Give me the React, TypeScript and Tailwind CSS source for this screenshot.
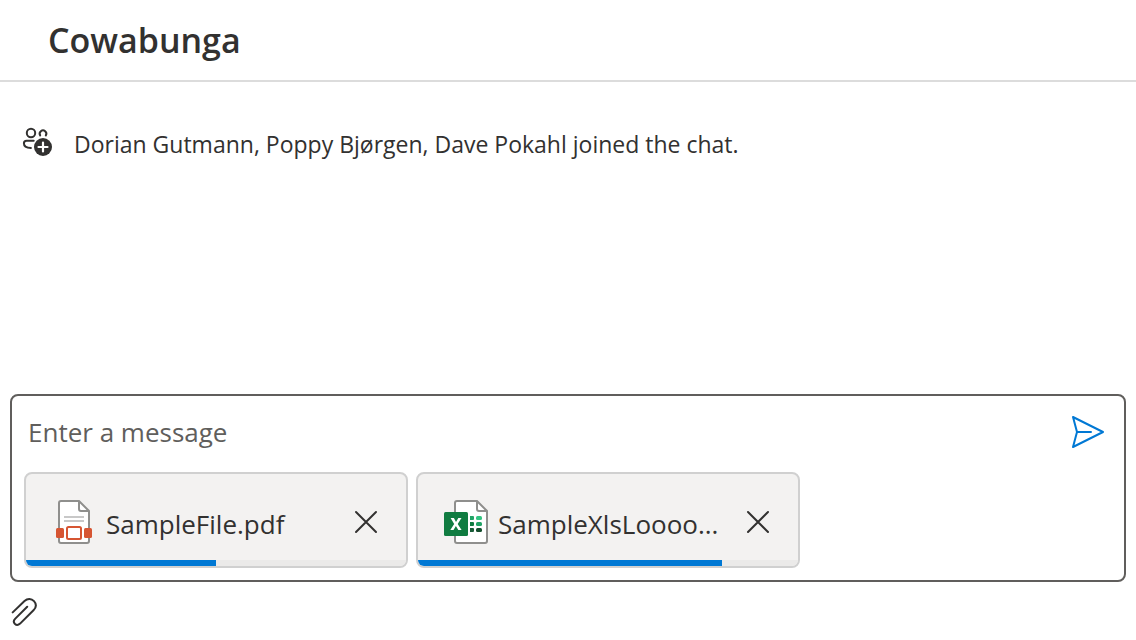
import { useState } from 'react';
import type { ReactNode } from 'react';

type Attachment = {
  id: string;
  name: string;
  progress: number;
  icon: ReactNode;
};

function PeopleAddIcon() {
  return (
    <svg aria-hidden="true" className="h-8 w-8 shrink-0" viewBox="0 0 32 32" fill="none">
      <g stroke="#323130" strokeWidth="2" strokeLinecap="round">
        <circle cx="9" cy="7" r="4.2" />
        <path d="M18.2 9.4a3.3 3.3 0 1 1 5.6 0" />
        <path d="M11.7 14.8H4.6c-1.9 0-2.7 1-2.7 2.5 0 3 2.7 4.7 7 4.8" />
      </g>
      <circle cx="21" cy="21" r="9" fill="#323130" />
      <path d="M21 16.5v9M16.5 21h9" stroke="#fff" strokeWidth="2.2" strokeLinecap="round" />
    </svg>
  );
}

function PdfIcon() {
  return (
    <svg aria-hidden="true" className="h-12 w-12 shrink-0" viewBox="0 0 48 48" fill="none">
      <path d="M11 3h18l10 10v30a2 2 0 0 1-2 2H11a2 2 0 0 1-2-2V5a2 2 0 0 1 2-2Z" fill="#fff" stroke="#8f8f8d" strokeWidth="2" />
      <path d="M29 3v8a2 2 0 0 0 2 2h8" stroke="#8f8f8d" strokeWidth="2" />
      <path d="M14 19h20M14 23h20" stroke="#c8c8c8" strokeWidth="2" />
      <rect x="6" y="30" width="8" height="10" rx="1.5" fill="#d65532" />
      <rect x="34" y="30" width="8" height="10" rx="1.5" fill="#d65532" />
      <rect x="14" y="28" width="20" height="14" fill="#fff" />
      <rect x="17" y="29" width="14" height="12" rx="1.5" fill="#fff" stroke="#d65532" strokeWidth="2" />
    </svg>
  );
}

function ExcelIcon() {
  return (
    <svg aria-hidden="true" className="h-12 w-12 shrink-0" viewBox="0 0 48 48" fill="none">
      <path d="M15 3h20l10 10v30a2 2 0 0 1-2 2H15a2 2 0 0 1-2-2V5a2 2 0 0 1 2-2Z" fill="#fff" stroke="#8f8f8d" strokeWidth="2" />
      <path d="M35 3v8a2 2 0 0 0 2 2h8" stroke="#8f8f8d" strokeWidth="2" />
      <path d="M28 18h3a1 1 0 0 1 1 1v2a1 1 0 0 1-1 1h-3Z" fill="#21a366" />
      <rect x="34" y="18" width="6" height="4" rx="1.5" fill="#33c481" />
      <path d="M28 24h3a1 1 0 0 1 1 1v2a1 1 0 0 1-1 1h-3Z" fill="#107c41" />
      <rect x="34" y="24" width="6" height="4" rx="1.5" fill="#21a366" />
      <path d="M28 30h3a1 1 0 0 1 1 1v2a1 1 0 0 1-1 1h-3Z" fill="#185c37" />
      <rect x="34" y="30" width="6" height="4" rx="1.5" fill="#134d2c" />
      <rect x="2" y="14" width="24" height="24" rx="1.5" fill="#107c41" />
      <path d="m8.6 20 3.600 6-3.900 6h3.200l2.400-4.100 2.400 4.100h3.300l-3.900-6 3.800-6h-3.200L14 24l-2.100-4H8.600Z" fill="#fff" />
    </svg>
  );
}

function CloseIcon() {
  return (
    <svg aria-hidden="true" className="h-6 w-6" viewBox="0 0 24 24">
      <path d="m2 2 20 20m0-20-20 20" stroke="#323130" strokeWidth="2" strokeLinecap="round" />
    </svg>
  );
}

function SendIcon() {
  return (
    <svg aria-hidden="true" className="h-9 w-9" viewBox="0 0 36 36" fill="none">
      <path d="M3 3 33 18 3 33l4-15L3 3Zm4 15h14" stroke="#0078d4" strokeWidth="2" strokeLinecap="round" strokeLinejoin="round" />
    </svg>
  );
}

function PaperclipIcon() {
  return (
    <svg aria-hidden="true" className="h-8 w-7" viewBox="0 0 28 32" fill="none">
      <path
        d="M2.7 16.4 14.500 5c3.100-2.900 6.900-2.700 9.500.2 2.400 2.700 2.300 6.200-.5 9L10.100 27.600c-1.800 1.700-3.800 1.700-5.300.2-1.400-1.500-1.200-3.500.5-5.200L17.200 10.700"
        stroke="#323130"
        strokeWidth="2"
        strokeLinecap="round"
        strokeLinejoin="round"
      />
    </svg>
  );
}

const initialAttachments: Attachment[] = [
  { id: 'pdf', name: 'SampleFile.pdf', progress: 50, icon: <PdfIcon /> },
  { id: 'xls', name: 'SampleXlsLoooo...', progress: 80, icon: <ExcelIcon /> },
];

function AttachmentCard({ file, onRemove }: { file: Attachment; onRemove: () => void }) {
  return (
    <li className="flex w-96 flex-col overflow-hidden rounded-lg border-2 border-[#d0d0d0] bg-[#f3f2f1]">
      <div className="flex h-[86px] items-center px-6 pt-2.5">
        {file.icon}
        <span className="mt-1 ml-2 flex-1 truncate text-[26px] leading-9 text-[#323130]">{file.name}</span>
        <button type="button" aria-label={`Remove ${file.name}`} onClick={onRemove} className="flex h-8 w-8 shrink-0 items-center justify-center">
          <CloseIcon />
        </button>
      </div>
      <div
        role="progressbar"
        aria-label={`Uploading ${file.name}`}
        aria-valuenow={file.progress}
        aria-valuemin={0}
        aria-valuemax={100}
        className="h-1.5 bg-[#ebeae9]"
      >
        <div className="h-full bg-[#0078d4]" style={{ width: `${file.progress}%` }} />
      </div>
    </li>
  );
}

export default function App() {
  const [message, setMessage] = useState('');
  const [files, setFiles] = useState(initialAttachments);

  return (
    <div className="flex min-h-screen flex-col bg-white font-['Open_Sans',sans-serif] text-[#323130]">
      <header className="border-b-2 border-[#dcdcdc] px-12 py-4">
        <h1 className="text-[34px] leading-12 font-semibold">Cowabunga</h1>
      </header>

      <main className="flex-1 px-[22px] pt-11">
        <div className="flex items-start gap-5">
          <PeopleAddIcon />
          <p className="text-[23px] leading-9">Dorian Gutmann, Poppy Bjørgen, Dave Pokahl joined the chat.</p>
        </div>
      </main>

      <footer className="px-2.5 pb-3">
        <form
          onSubmit={(event) => event.preventDefault()}
          className="rounded-lg border-2 border-[#605e5c] p-3"
        >
          <div className="flex h-12 items-center pr-1.5 pl-1">
            <input
              type="text"
              aria-label="Message"
              placeholder="Enter a message"
              value={message}
              onChange={(event) => setMessage(event.target.value)}
              className="h-12 min-w-0 flex-1 bg-transparent text-[26px] placeholder:text-[#605e5c] focus:outline-none"
            />
            <button type="submit" aria-label="Send message" className="flex h-9 w-9 items-center justify-center">
              <SendIcon />
            </button>
          </div>
          <ul className="mt-4 flex flex-wrap gap-2">
            {files.map((file) => (
              <AttachmentCard
                key={file.id}
                file={file}
                onRemove={() => setFiles((current) => current.filter((item) => item.id !== file.id))}
              />
            ))}
          </ul>
        </form>
        <button type="button" aria-label="Attach a file" className="mt-3.5 flex">
          <PaperclipIcon />
        </button>
      </footer>
    </div>
  );
}
